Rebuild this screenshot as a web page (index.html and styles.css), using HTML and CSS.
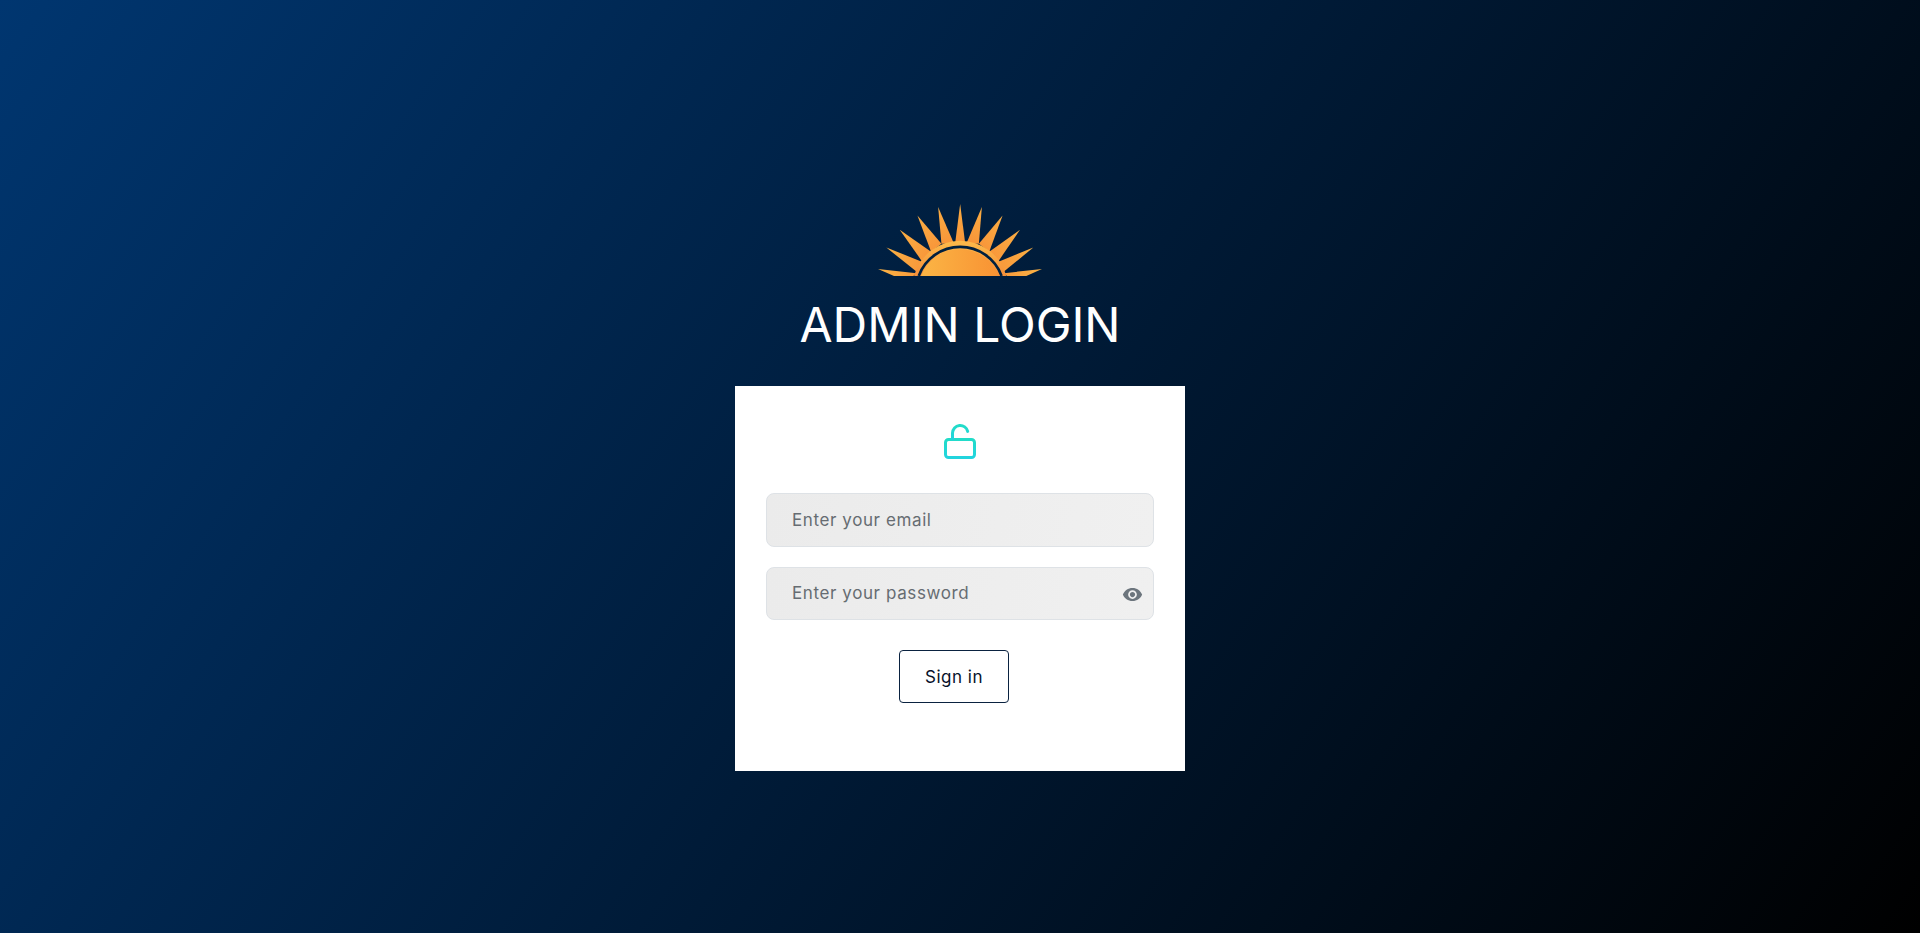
FILE: index.html
```html
<!DOCTYPE html>
<html>
<head>
    <title>Admin Login</title>
    <link rel="stylesheet" href="styles.css">
</head>
<body>
    <div class="login-page">
        <svg class="logo" viewBox="57 43 491 215" width="164" height="72">
            <defs>
                <linearGradient id="sunFill" x1="0" y1="0" x2="1" y2="0">
                    <stop offset="0" stop-color="#fbb545"/>
                    <stop offset="1" stop-color="#f89233"/>
                </linearGradient>
                <linearGradient id="rimFill" x1="0" y1="0" x2="0" y2="1">
                    <stop offset="0" stop-color="#fdbb4a"/>
                    <stop offset="1" stop-color="#f58f3a"/>
                </linearGradient>
                <radialGradient id="rayFill" gradientUnits="userSpaceOnUse" cx="303" cy="258" r="250">
                    <stop offset="0.45" stop-color="#f8973a"/>
                    <stop offset="1" stop-color="#fcb445"/>
                </radialGradient>
            </defs>
            <g fill="url(#rayFill)">
                <polygon points="57,237 172,250 163,258 105,258"/>
                <polygon points="82,173 190,216 172,245"/>
                <polygon points="122,120 216,186 190,216"/>
                <polygon points="175,77 247,162 216,186"/>
                <polygon points="237,52 284,160 247,162"/>
                <polygon points="303,43 318,160 288,160"/>
                <polygon points="368,52 359,162 322,160"/>
                <polygon points="430,77 390,186 359,162"/>
                <polygon points="482,120 416,216 390,186"/>
                <polygon points="522,173 434,245 416,216"/>
                <polygon points="548,237 501,258 443,258 434,250"/>
            </g>
            <path d="M165 258A143 143 0 0 1 441 258Z" fill="url(#rimFill)"/>
            <path d="M179 258A132 132 0 0 1 427 258" fill="none" stroke="#00203f" stroke-width="8"/>
            <path d="M186 258A125.6 125.6 0 0 1 420 258Z" fill="url(#sunFill)"/>
        </svg>
        <h1 class="title">ADMIN LOGIN</h1>
        <form class="card">
            <svg class="lock" viewBox="0 0 34 38" width="34" height="38">
                <defs>
                    <linearGradient id="lockFill" x1="0" y1="0" x2="0" y2="1">
                        <stop offset="0" stop-color="#22dcc8"/>
                        <stop offset="1" stop-color="#22d4de"/>
                    </linearGradient>
                </defs>
                <g fill="none" stroke="url(#lockFill)" stroke-width="3" stroke-linecap="round">
                    <rect x="2.5" y="16.5" width="29" height="18" rx="3"/>
                    <path d="M9.5 16V10a7.7 7.7 0 0 1 15.2-1.6"/>
                </g>
            </svg>
            <input class="field" type="email" placeholder="Enter your email">
            <div class="password-wrap">
                <input class="field" type="password" placeholder="Enter your password">
                <svg class="eye" viewBox="0 0 24 24" width="21" height="21">
                    <path fill="#6c757d" d="M12 4.5C7 4.5 2.73 7.61 1 12c1.73 4.39 6 7.5 11 7.5s9.27-3.11 11-7.5c-1.73-4.39-6-7.5-11-7.5zM12 17c-2.76 0-5-2.24-5-5s2.24-5 5-5 5 2.24 5 5-2.24 5-5 5zm0-8c-1.66 0-3 1.34-3 3s1.34 3 3 3 3-1.34 3-3-1.34-3-3-3z"/>
                </svg>
            </div>
            <button class="signin" type="button">Sign in</button>
        </form>
    </div>
</body>
</html>
```

FILE: styles.css
```css
html, body {
    height: 100%;
}
body {
    margin: 0;
    font-family: Inter, "Liberation Sans", sans-serif;
    background: linear-gradient(125deg, #003670 0%, #000 100%);
}
.login-page {
    display: flex;
    flex-direction: column;
    align-items: center;
    padding-top: 204px;
}
.logo {
    display: block;
}
.title {
    margin: 18px 0 30px;
    font-size: 48px;
    line-height: 62px;
    font-weight: 400;
    color: #fff;
}
.card {
    box-sizing: border-box;
    width: 450px;
    height: 385px;
    padding: 37px 31px 0;
    background: #fff;
    display: flex;
    flex-direction: column;
    align-items: center;
}
.lock {
    margin-bottom: 32px;
}
.field {
    box-sizing: border-box;
    display: block;
    width: 388px;
    height: 53.5px;
    padding: 0 25px;
    border: 1px solid #dee2e6;
    border-radius: 8px;
    background: linear-gradient(100deg, #ebebeb, #f0f0f0);
    font-family: inherit;
    font-size: 17px;
    letter-spacing: 0.6px;
    margin-bottom: 20px;
}
.field::placeholder {
    color: #666c72;
    opacity: 1;
}
.password-wrap {
    position: relative;
}
.eye {
    position: absolute;
    right: 11px;
    top: 17px;
}
.signin {
    width: 110px;
    height: 53px;
    margin: 10px 12px 0 0;
    border: 1px solid #0a2240;
    border-radius: 4px;
    background: #fff;
    color: #06122a;
    font-family: inherit;
    font-size: 17px;
    letter-spacing: 0.5px;
}
```
